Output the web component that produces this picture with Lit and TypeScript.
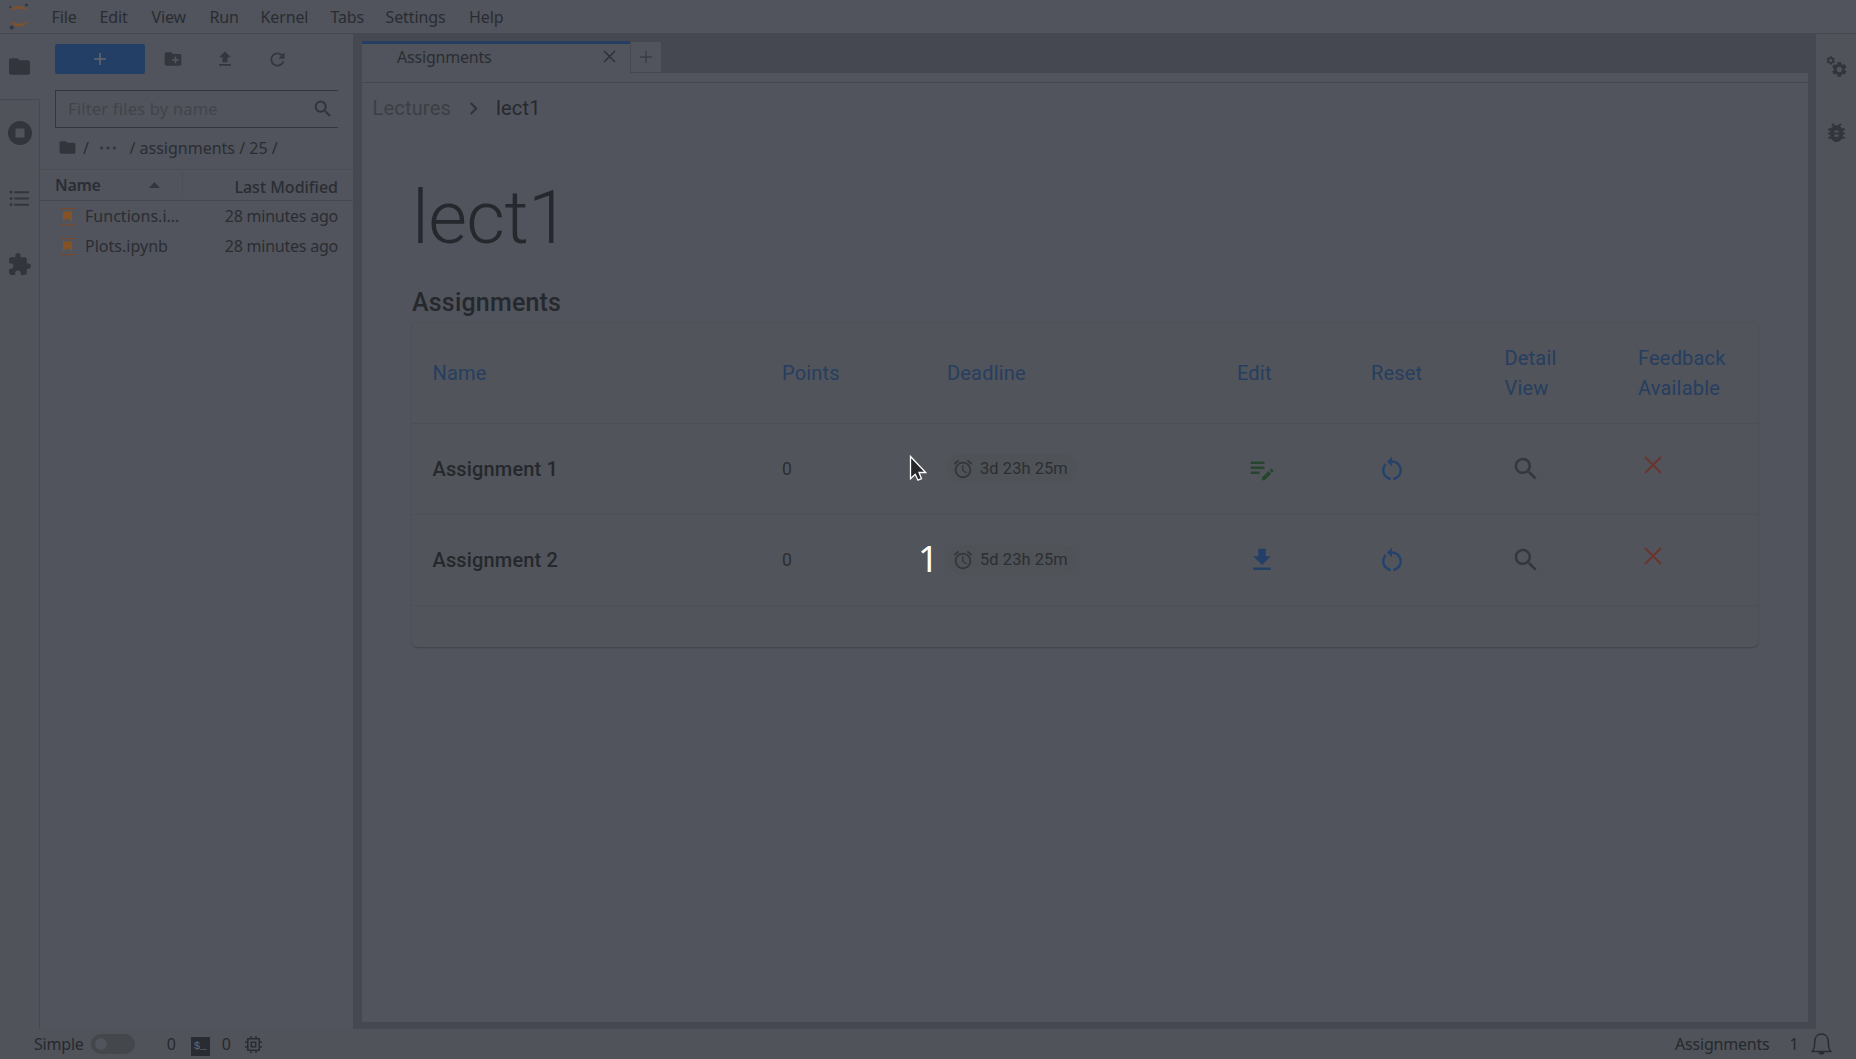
import { LitElement, html, css, svg } from "lit";
import { customElement } from "lit/decorators.js";

const P = {
  folder: "M10 4H4c-1.1 0-1.99.9-1.99 2L2 18c0 1.1.9 2 2 2h16c1.1 0 2-.9 2-2V8c0-1.1-.9-2-2-2h-8l-2-2z",
  newFolder: "M20 6h-8l-2-2H4c-1.11 0-1.99.89-1.99 2L2 18c0 1.11.89 2 2 2h16c1.11 0 2-.89 2-2V8c0-1.11-.89-2-2-2zm-1 8h-3v3h-2v-3h-3v-2h3V9h2v3h3v2z",
  upload: "M9 16h6v-6h4l-7-7-7 7h4zm-4 2h14v2H5z",
  refresh: "M17.65 6.35C16.2 4.9 14.21 4 12 4c-4.42 0-7.99 3.58-7.99 8s3.57 8 7.99 8c3.73 0 6.84-2.55 7.73-6h-2.08c-.82 2.33-3.04 4-5.65 4-3.31 0-6-2.69-6-6s2.69-6 6-6c1.66 0 3.14.69 4.22 1.78L13 11h7V4l-2.35 2.35z",
  search: "M15.5 14h-.79l-.28-.27C15.41 12.59 16 11.11 16 9.5 16 5.91 13.09 3 9.5 3S3 5.91 3 9.5 5.91 16 9.5 16c1.61 0 3.09-.59 4.23-1.57l.27.28v.79l5 4.99L20.49 19l-4.99-5zm-6 0C7.01 14 5 11.99 5 9.5S7.01 5 9.5 5 14 7.01 14 9.5 11.99 14 9.5 14z",
  stop: "M12 0a12 12 0 1 0 0 24a12 12 0 1 0 0-24zM7.5 7.5h9v9h-9z",
  list: "M7 5h14v2H7zM7 11h14v2H7zM7 17h14v2H7zM2.5 6a1.4 1.4 0 1 0 2.8 0a1.4 1.4 0 1 0-2.8 0M2.5 12a1.4 1.4 0 1 0 2.8 0a1.4 1.4 0 1 0-2.8 0M2.5 18a1.4 1.4 0 1 0 2.8 0a1.4 1.4 0 1 0-2.8 0",
  puzzle: "M20.5 11H19V7c0-1.1-.9-2-2-2h-4V3.5C13 2.12 11.88 1 10.5 1S8 2.12 8 3.5V5H4c-1.1 0-1.99.9-1.99 2v3.8H3.5c1.49 0 2.7 1.21 2.7 2.7s-1.21 2.7-2.7 2.7H2V20c0 1.1.9 2 2 2h3.8v-1.5c0-1.49 1.21-2.7 2.7-2.7 1.49 0 2.7 1.21 2.7 2.7V22H17c1.1 0 2-.9 2-2v-4h1.5c1.38 0 2.5-1.12 2.5-2.5S21.88 11 20.5 11z",
  bug: "M20 8h-2.81c-.45-.78-1.07-1.45-1.82-1.96L17 4.41 15.59 3l-2.17 2.17C12.96 5.06 12.49 5 12 5c-.49 0-.96.06-1.41.17L8.41 3 7 4.41l1.62 1.63C7.88 6.55 7.26 7.22 6.81 8H4v2h2.09c-.05.33-.09.66-.09 1v1H4v2h2v1c0 .34.04.67.09 1H4v2h2.81c1.04 1.79 2.97 3 5.19 3s4.15-1.21 5.19-3H20v-2h-2.09c.05-.33.09-.66.09-1v-1h2v-2h-2v-1c0-.34-.04-.67-.09-1H20V8zm-6 8h-4v-2h4v2zm0-4h-4v-2h4v2z",
  gear: "M19.14 12.94c.04-.3.06-.61.06-.94 0-.32-.02-.64-.07-.94l2.03-1.58c.18-.14.23-.41.12-.61l-1.92-3.32c-.12-.22-.37-.29-.59-.22l-2.39.96c-.5-.38-1.03-.7-1.62-.94l-.36-2.54c-.04-.24-.24-.41-.48-.41h-3.84c-.24 0-.43.17-.47.41l-.36 2.54c-.59.24-1.13.57-1.62.94l-2.39-.96c-.22-.08-.47 0-.59.22L2.74 8.87c-.12.21-.08.47.12.61l2.03 1.58c-.05.3-.09.63-.09.94s.02.64.07.94l-2.03 1.58c-.18.14-.23.41-.12.61l1.92 3.32c.12.22.37.29.59.22l2.39-.96c.5.38 1.03.7 1.62.94l.36 2.54c.05.24.24.41.48.41h3.84c.24 0 .44-.17.47-.41l.36-2.54c.59-.24 1.13-.56 1.62-.94l2.39.96c.22.08.47 0 .59-.22l1.92-3.32c.12-.22.07-.47-.12-.61l-2.01-1.58zM12 15.6c-1.98 0-3.6-1.62-3.6-3.6s1.62-3.6 3.6-3.6 3.6 1.62 3.6 3.6-1.62 3.6-3.6 3.6z",
  restart: "M12 5V2L8 6l4 4V7c3.31 0 6 2.69 6 6 0 2.97-2.17 5.43-5 5.91v2.02c3.95-.49 7-3.85 7-7.93 0-4.42-3.58-8-8-8zm-6 8c0-1.65.67-3.15 1.76-4.24L6.34 7.34C4.9 8.79 4 10.79 4 13c0 4.08 3.05 7.44 7 7.93v-2.02c-2.83-.48-5-2.94-5-5.91z",
  download: "M19 9h-4V3H9v6H5l7 7 7-7zM5 18v2h14v-2H5z",
  editNote: "M3 10h11v2H3v-2zm0-2h11V6H3v2zm0 8h7v-2H3v2zm15.01-3.13.71-.71c.39-.39 1.02-.39 1.41 0l.71.71c.39.39.39 1.02 0 1.41l-.71.71-2.12-2.12zm-.71.71-5.3 5.3V21h2.12l5.3-5.3-2.12-2.12z",
  alarm: "M22 5.72l-4.6-3.86-1.29 1.53 4.6 3.86L22 5.72zM7.88 3.39L6.6 1.86 2 5.71l1.29 1.53 4.59-3.85zM12.5 8H11v6l4.75 2.85.75-1.23-4-2.37V8zM12 4c-4.97 0-9 4.03-9 9s4.02 9 9 9c4.97 0 9-4.03 9-9s-4.03-9-9-9zm0 16c-3.87 0-7-3.13-7-7s3.13-7 7-7 7 3.13 7 7-3.13 7-7 7z",
  chevron: "M10 6 8.59 7.41 13.17 12l-4.58 4.59L10 18l6-6z",
};

const icon = (d: string, size: number, cls = "") =>
  html`<svg class="ic ${cls}" width=${size} height=${size} viewBox="0 0 24 24"><path fill="currentColor" fill-rule="evenodd" d=${d}/></svg>`;
const strokes = (d: string, size: number, w: number, cls = "") =>
  html`<svg class="ic ${cls}" width=${size} height=${size} viewBox="0 0 ${size} ${size}"><path fill="none" stroke="currentColor" stroke-width=${w} d=${d}/></svg>`;

const shared = css`
  * { box-sizing: border-box; }
  .ic { display: block; flex: none; }
`;

@customElement("menu-bar")
class MenuBar extends LitElement {
  static styles = [shared, css`
    :host { display: flex; height: 34px; border-bottom: 1px solid #454850; align-items: center; letter-spacing: -.12px; }
    .logo { margin-left: 9px; margin-right: 21.500px; }
    .items { display: flex; }
    .item { height: 33px; line-height: 35px; white-space: nowrap; }
  `];
  render() {
    const items: [string, number][] = [["File", 48], ["Edit", 52], ["View", 58], ["Run", 51], ["Kernel", 70], ["Tabs", 55], ["Settings", 83.5], ["Help", 50]];
    return html`
      <svg class="ic logo" width="21" height="28" viewBox="0 0 21 28">
        <path fill="#7d522b" d="M.8 8.500C4 1 16 1 19 8.500C14.500 4.800 5.500 4.800.8 8.500zM.8 17.500C4 25.500 16 25.500 19 17.500C14.500 21.700 5.500 21.700.8 17.500z"/>
        <circle cx="1.300" cy="4" r="1" fill="#33363c"/><circle cx="17.500" cy="2" r="1.500" fill="#33363c"/><circle cx="2.700" cy="24.500" r="2" fill="#33363c"/>
      </svg>
      <div class="items">${items.map(([t, w]) => html`<div class="item" style="width:${w}px">${t}</div>`)}</div>`;
  }
}

@customElement("activity-bar")
class ActivityBar extends LitElement {
  static styles = [shared, css`
    :host { display: flex; flex-direction: column; width: 40px; flex: none; color: #33353d; background: #505359; }
    .tab { height: 66px; display: flex; align-items: center; justify-content: center; border-right: 1px solid #454850; padding-bottom: 1px; }
    .tab.on { border-right-color: #51545c; border-bottom: 1px solid #454850; background: #51545c; padding-bottom: 0; }
    .rest { flex: 1; border-right: 1px solid #454850; }
  `];
  render() {
    return html`
      <div class="tab on">${icon(P.folder, 25)}</div>
      <div class="tab">${icon(P.stop, 24)}</div>
      <div class="tab">${icon(P.list, 25)}</div>
      <div class="tab">${icon(P.puzzle, 25)}</div>
      <div class="rest"></div>`;
  }
}

@customElement("file-browser")
class FileBrowser extends LitElement {
  static styles = [shared, css`
    :host { display: flex; flex-direction: column; width: 313px; flex: none; color: #2a2d33; }
    .tools { display: flex; align-items: center; height: 30px; margin: 10px 0 0 15px; color: #33363c; }
    .new { width: 90px; height: 30px; border-radius: 2px; background: #243f66; color: #62676f; display: flex; align-items: center; justify-content: center; margin-right: 18px; }
    .tool { width: 20px; margin-right: 32px; }
    .filter { margin: 16px 15px 0 15px; height: 38px; border: 1px solid #33363c; border-right: 0; display: flex; align-items: center; justify-content: space-between; padding: 0 4px 0 12px; color: #41444a; letter-spacing: .2px; font-size: 16.500px; }
    .glass { color: #303339; }
    .crumbs { display: flex; align-items: center; height: 41px; padding: 0 0 2px 18px; }
    .crumbs .ic { color: #33353d; }
    .slash { margin-left: 6px; }
    .dots { margin: 0 13px 0 11.500px; }
    .head { display: flex; height: 32px; border-top: 1px solid #4b4e54; border-bottom: 1px solid #454850; font-weight: 500; }
    .name { width: 143px; padding: 0 22px 0 15px; border-right: 1px solid #4b4e54; margin: 2px 0 2px; display: flex; align-items: center; justify-content: space-between; font-weight: 600; line-height: 24px; letter-spacing: -.3px; }
    .mod { flex: 1; text-align: right; padding: 4px 15px 0 0; line-height: 27px; }
    .row { display: flex; align-items: center; height: 30px; padding: 0 15px 0 19px; letter-spacing: -.23px; }
    .fname { margin-left: 9px; flex: 1; letter-spacing: .02px; }
  `];
  render() {
    const book = html`<svg class="ic" width="17" height="17" viewBox="0 0 17 17"><path fill="none" stroke="#75492a" stroke-width="1" d="M.5.5h16v16H.5z"/><path fill="#855226" d="M4 3.500h9v10L8.500 9.800 4 13.500z"/></svg>`;
    return html`
      <div class="tools">
        <div class="new">${strokes("M6 0V12M0 6H12", 12, 1.5)}</div>
        <div class="tool">${icon(P.newFolder, 20)}</div>
        <div class="tool">${icon(P.upload, 20)}</div>
        <div class="tool">${icon(P.refresh, 21)}</div>
      </div>
      <div class="filter"><span>Filter files by name</span>${icon(P.search, 22, "glass")}</div>
      <div class="crumbs">${icon(P.folder, 19)}<span class="slash">/</span>
        <svg class="ic dots" width="16" height="6" viewBox="0 0 16 6"><path fill="#33353d" d="M0 3a1.600 1.600 0 1 0 3.200 0a1.600 1.600 0 1 0-3.200 0M6.400 3a1.600 1.600 0 1 0 3.200 0a1.600 1.600 0 1 0-3.200 0M12.800 3a1.600 1.600 0 1 0 3.200 0a1.600 1.600 0 1 0-3.200 0"/></svg>
        <span>/ assignments / 25 /</span></div>
      <div class="head">
        <div class="name">Name<svg class="ic" width="11" height="6" viewBox="0 0 11 6"><path fill="#33363c" d="M0 6 5.500 0 11 6z"/></svg></div>
        <div class="mod">Last Modified</div>
      </div>
      ${["Functions.i…", "Plots.ipynb"].map((f) => html`<div class="row">${book}<span class="fname">${f}</span><span>28 minutes ago</span></div>`)}`;
  }
}

interface Assignment { name: string; left: string; local: boolean; }

@customElement("assignment-table")
class AssignmentTable extends LitElement {
  static styles = [shared, css`
    :host { display: block; height: 324px; border-radius: 5px; box-shadow: 0 1px 1px #414449, 0 0 2px #4d5056; font-family: Roboto, sans-serif; background: #51545a; }
    .grid { display: grid; grid-template-columns: 349.500px 165px 290px 134px 133.500px 133.500px 1fr; align-items: center; border-bottom: 1px solid #4c4f54; height: 91px; }
    .grid > * { padding-left: 20.500px; }
    .head { height: 101px; color: #263e60; font-size: 20px; line-height: 30px; letter-spacing: .19px; }
    .name { font-size: 20px; font-weight: 500; color: #25282d; letter-spacing: .15px; }
    .pts { font-size: 17.500px; color: #2b2e33; }
    .chip { display: flex; align-items: center; height: 30px; width: 130px; border-radius: 15px; background: #4f5257; font-size: 16.400px; color: #2b2e33; padding-left: 5px; gap: 6px; white-space: nowrap; letter-spacing: .1px; }
    .clock { color: #34373c; }
    .grid > .edit { padding-left: 30px; }
    .grid > .reset { padding-left: 26px; color: #24436c; }
    .grid > .view { padding-left: 27px; color: #34373c; }
    .grid > .no { padding-left: 26px; padding-bottom: 8px; color: #6b332e; }
    .green { color: #27442f; }
    .blue { color: #233f68; }
  `];
  private rows: Assignment[] = [
    { name: "Assignment 1", left: "3d 23h 25m", local: true },
    { name: "Assignment 2", left: "5d 23h 25m", local: false },
  ];
  render() {
    return html`
      <div class="grid head"><div>Name</div><div>Points</div><div>Deadline</div><div>Edit</div><div>Reset</div><div>Detail<br>View</div><div>Feedback<br>Available</div></div>
      ${this.rows.map((r) => html`<div class="grid">
        <div class="name">${r.name}</div><div class="pts">0</div>
        <div><span class="chip">${icon(P.alarm, 22, "clock")}${r.left}</span></div>
        <div class="edit">${r.local ? icon(P.editNote, 30, "green") : icon(P.download, 30, "blue")}</div>
        <div class="reset">${icon(P.restart, 30)}</div>
        <div class="view">${icon(P.search, 30)}</div>
        <div class="no">${strokes("M1 1 17 17M17 1 1 17", 18, 1.8)}</div>
      </div>`)}`;
  }
}

@customElement("main-dock")
class MainDock extends LitElement {
  static styles = [shared, css`
    :host { display: flex; flex-direction: column; flex: 1; background: #454850; padding: 7px 8px 7px 9px; }
    .tabs { display: flex; height: 32px; color: #2a2d33; }
    .tab { width: 268px; border-top: 3px solid #253d60; background: #51545c; display: flex; justify-content: space-between; padding: 0 14px 4px 35px; align-items: center; letter-spacing: -.2px; }
    .add { width: 31px; height: 31px; margin-top: 1px; background: #51545c; border-left: 1px solid #454850; border-bottom: 1px solid #454850; display: flex; align-items: center; justify-content: center; color: #3a3d43; }
    .strip { height: 10px; background: #51545c; border-bottom: 1px solid #454850; }
    .body { flex: 1; background: #51545c; padding: 0 50px; font-family: Roboto, sans-serif; display: flex; flex-direction: column; }
    .crumbs { display: flex; align-items: center; height: 50px; margin-left: -39.500px; font-size: 20px; letter-spacing: .19px; color: #3c3f45; }
    .crumbs .ic { margin: 0 10px 0 10px; color: #303339; }
    .here { color: #26292e; }
    .title { margin: 37px 0 0; font-size: 75px; font-weight: 300; line-height: 94px; letter-spacing: -.63px; color: #25282d; }
    .sub { margin: 22px 0 3px; font-size: 25px; font-weight: 500; line-height: 34px; letter-spacing: .19px; color: #25282d; }
  `];
  render() {
    return html`
      <div class="tabs">
        <div class="tab"><span>Assignments</span>${strokes("M1 1 12 12M12 1 1 12", 13, 1.3)}</div>
        <div class="add">${strokes("M6 0V12M0 6H12", 12, 1.4)}</div>
      </div>
      <div class="strip"></div>
      <div class="body">
        <div class="crumbs"><span>Lectures</span>${icon(P.chevron, 25)}<span class="here">lect1</span></div>
        <div class="title">lect1</div>
        <div class="sub">Assignments</div>
        <assignment-table></assignment-table>
      </div>`;
  }
}

@customElement("right-bar")
class RightBar extends LitElement {
  static styles = [shared, css`
    :host { display: flex; flex-direction: column; width: 40px; flex: none; align-items: center; color: #32353c; background: #505359; padding-top: 21px; gap: 43px; }
  `];
  render() {
    return html`
      <svg class="ic" width="22" height="22" viewBox="0 0 22 22">
        ${svg`<g fill="currentColor" fill-rule="evenodd"><path transform="translate(0.500 0.100) scale(.44)" d=${P.gear}/><path transform="translate(5.200 5.300) scale(.76)" d=${P.gear}/></g>`}
      </svg>
      ${icon(P.bug, 25, "bug")}`;
  }
}

@customElement("status-bar")
class StatusBar extends LitElement {
  static styles = [shared, css`
    :host { display: flex; height: 30px; align-items: center; background: #505359; color: #26292e; padding: 0 24px 0 34px; letter-spacing: -.2px; }
    .toggle { width: 44px; height: 20px; border-radius: 10px; background: #44484c; margin: 0 32px 0 7px; padding: 4px; }
    .knob { width: 12px; height: 12px; border-radius: 6px; background: #51545c; }
    .term { width: 19px; height: 19px; margin: 5px 12px 0 15px; background: #292c33; color: #666a72; font: 11px/19px "Liberation Mono", monospace; padding-left: 3px; }
    .chip { margin-left: 14px; }
    .space { flex: 1; }
    .count { margin: 0 12.500px 0 20px; }
  `];
  render() {
    return html`
      <span>Simple</span><div class="toggle"><div class="knob"></div></div>
      <span>0</span><div class="term">$_</div><span>0</span>
      <svg class="ic chip" width="17" height="17" viewBox="0 0 17 17"><g fill="none" stroke="#292c33" stroke-width="1.500"><path d="M2.800 2.800h11.400v11.400H2.800zM6.300 6.300h4.400v4.400H6.300zM6 0v3M11 0v3M6 14v3M11 14v3M0 6h3M0 11h3M14 6h3M14 11h3"/></g></svg>
      <div class="space"></div>
      <span>Assignments</span><span class="count">1</span>
      <svg class="ic" width="21" height="22" viewBox="0 0 21 22"><path fill="none" stroke="#292c33" stroke-width="1.500" stroke-linejoin="round" d="M1 18.500H20C17.500 16.500 17.300 14 17.300 9C17.300 4 14.500 1 10.500 1S3.700 4 3.700 9C3.700 14 3.500 16.500 1 18.500z"/><path fill="#292c33" d="M7.500 19h6a3 2.600 0 0 1-6 0z"/></svg>`;
  }
}

@customElement("app-root")
class AppRoot extends LitElement {
  static styles = [shared, css`
    :host { display: block; position: relative; width: 1856px; height: 1059px; overflow: hidden; background: #51545c; color: #292c32; font: 16px/24px "Noto Sans", sans-serif; }
    .shell { display: flex; flex-direction: column; height: 100%; }
    .work { display: flex; flex: 1; min-height: 0; }
    .pointer { position: absolute; left: 908px; top: 453px; }
    .countdown { position: absolute; left: 918px; top: 535px; font: 36px/48px "Noto Sans", sans-serif; color: #fff; }
  `];
  render() {
    return html`
      <div class="shell">
        <menu-bar></menu-bar>
        <div class="work"><activity-bar></activity-bar><file-browser></file-browser><main-dock></main-dock><right-bar></right-bar></div>
        <status-bar></status-bar>
      </div>
      <svg class="ic pointer" width="22" height="30" viewBox="0 0 22 30"><path fill="#25272a" stroke="#fff" stroke-width="1.300" d="M2.500 3.500V25.800L7.200 21.300 10 27.200 13.500 25.700 11 19.500H17.700z"/></svg>
      <div class="countdown">1</div>`;
  }
}
